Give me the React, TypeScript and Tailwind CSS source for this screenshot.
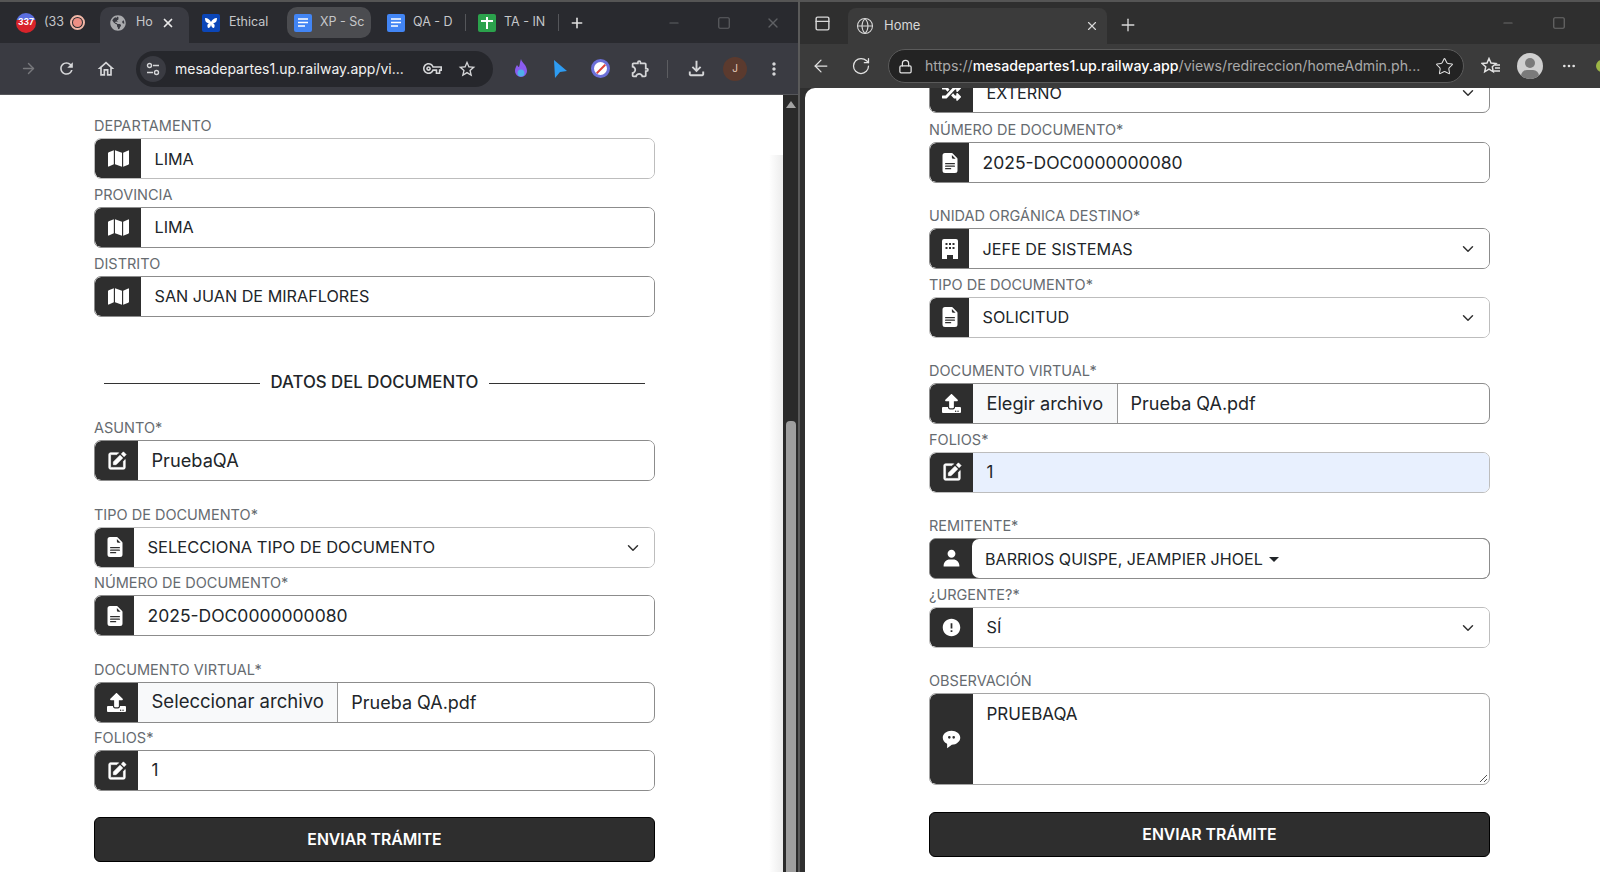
import type { ReactNode } from "react"
import { ChevronDown, ArrowLeft, ArrowRight, Lock, RotateCw, Star, Globe, X, Plus, Minus, Square, MoreHorizontal, PanelTop } from "lucide-react"
import { BiSolidEdit, BiSolidUser, BiSolidErrorCircle, BiSolidMessageRoundedDots } from "react-icons/bi"
import { BsFileEarmarkTextFill } from "react-icons/bs"
import { MdOutlineExtension, MdOutlineHome, MdRefresh, MdOutlineVpnKey, MdStarBorder, MdOutlineFileDownload, MdMoreVert } from "react-icons/md"
import { FaGlobeAmericas, FaMap, FaRandom, FaUpload } from "react-icons/fa"

const font = "font-['Inter','Open_Sans',sans-serif]"

const Label = ({ text }: { text: string }) => (
  <div className="h-[27.5px] flex items-end pb-[3px] text-[14.5px] leading-[18px] text-[#666b70]">{text}</div>
)

const Addon = ({ w, children }: { w: string; children: ReactNode }) => (
  <div className={`${w} shrink-0 bg-[#2e2e2e] text-white flex items-center justify-center text-[21px] rounded-l-[6px]`}>
    {children}
  </div>
)

const MapIcon = () => <FaMap size={21} />
const FileIcon = () => <BsFileEarmarkTextFill size={20} />
const EditIcon = () => <BiSolidEdit size={22} stroke="currentColor" strokeWidth={0.7} />

const BuildingIcon = () => (
  <svg width="16" height="20" viewBox="0 0 16 20">
    <path d="M2 0h12a2 2 0 0 1 2 2v18h-5v-4H5v4H0V2a2 2 0 0 1 2-2z" fill="currentColor" />
    <path d="M3.5 4h2v2h-2zM7 4h2v2H7zM10.500 4h2v2h-2zM3.500 8h2v2h-2zM7 8h2v2H7zM10.500 8h2v2h-2z" fill="#2e2e2e" />
  </svg>
)

const Field = ({
  label,
  value,
  icon,
  w = "w-[39px]",
  select,
  blue,
  soft,
  size = "text-[16.2px]",
  className = "",
}: {
  label: string
  value: string
  icon: ReactNode
  w?: string
  select?: boolean
  blue?: boolean
  soft?: boolean
  size?: string
  className?: string
}) => (
  <div className={className}>
    <Label text={label} />
    <div className={`h-[41px] flex border rounded-[7px] overflow-hidden ${soft ? "border-[#bdbdbd]" : "border-[#8c8c8c]"}`}>
      <Addon w={w}>{icon}</Addon>
      <div
        className={`flex-1 flex items-center justify-between pl-[13.500px] pr-[12px] pt-[1px] ${size} text-[#212529] ${blue ? "bg-[#e8f0fe]" : "bg-white"}`}
      >
        <span>{value}</span>
        {select && <ChevronDown size={18} strokeWidth={2} className="text-[#333]" />}
      </div>
    </div>
  </div>
)

const FileField = ({ label, button, file, size }: { label: string; button: string; file: string; size: string }) => (
  <div className="mt-[18px]">
    <Label text={label} />
    <div className="h-[41px] flex border border-[#8c8c8c] rounded-[7px] overflow-hidden">
      <Addon w="w-[43px]">
        <FaUpload size={19} />
      </Addon>
      <div className={`bg-[#f8f9fa] border-r border-[#9a9a9a] flex items-center px-[13.500px] ${size} text-[#212529]`}>
        {button}
      </div>
      <div className="flex-1 flex items-center pl-[13px] text-[18px] text-[#212529]">{file}</div>
    </div>
  </div>
)

const Submit = ({ className }: { className: string }) => (
  <div className={`${className} h-[45px] bg-[#2e2e2e] rounded-[6px] border border-black flex items-center justify-center text-white font-semibold text-[15.800px]`}>
    ENVIAR TRÁMITE
  </div>
)

const DocsIcon = () => (
  <svg width="18" height="18" viewBox="0 0 18 18" className="shrink-0">
    <rect width="18" height="18" rx="2" fill="#4285f4" />
    <path d="M4 5h10M4 8.500h10M4 12h7" stroke="#fff" strokeWidth="1.700" />
  </svg>
)

const SheetsIcon = () => (
  <svg width="18" height="18" viewBox="0 0 18 18" className="shrink-0">
    <rect width="18" height="18" rx="2" fill="#2ba24c" />
    <path d="M3 7h12M9 3v12" stroke="#fff" strokeWidth="2" />
  </svg>
)

const ButterflyIcon = () => (
  <svg width="18" height="18" viewBox="0 0 18 18" className="shrink-0">
    <rect width="18" height="18" rx="2" fill="#0b46b8" />
    <path d="M3 4c3 0 5 2 6 4 1-2 3-4 6-4 0 3-1 5-4 5 2 1 2 3 1 5-2 0-3-2-3-4 0 2-1 4-3 4-1-2-1-4 1-5-3 0-4-2-4-5z" fill="#fff" />
  </svg>
)

const FavoritesIcon = () => (
  <svg width="20" height="19" viewBox="0 0 20 19" fill="none" stroke="currentColor" strokeWidth="1.500" className="ml-[17px] shrink-0">
    <path d="M8 1.500l2 4.500 5 .5-3.700 3.300 1 5-4.300-2.600-4.300 2.600 1-5L1 6.500l5-.5z" />
    <path d="M14 8h5M14 11h5M13 14h6" />
  </svg>
)

const LeftWindow = () => (
  <div className="w-[798px] h-full flex flex-col shrink-0">
    <div className="h-[43px] bg-[#292a2f] flex items-center border-t-2 border-[#555] shrink-0 text-[12.500px] text-[#c6c7ca] whitespace-nowrap">
      <div className="w-[100px] flex items-center pl-[16px] shrink-0">
        <span className="w-[20px] h-[20px] rounded-full bg-[linear-gradient(#5a6ee0_35%,#d8232a_35%)] text-white text-[8.500px] font-bold flex items-center justify-center">337</span>
        <span className="ml-[8px] w-[18px]">(33</span>
        <span className="ml-[8px] w-[15px] h-[15px] rounded-full border-2 border-[#f2b8a8] flex items-center justify-center">
          <span className="w-[9px] h-[9px] rounded-full bg-[#ee8f84]" />
        </span>
      </div>
      <div className="w-[89px] h-[36px] self-end bg-[#3a3b42] rounded-t-[10px] flex items-center pl-[10px] pb-[5px] shrink-0">
        <FaGlobeAmericas size={16} className="text-[#a9aaad]" />
        <span className="ml-[10px] w-[20px]">Ho</span>
        <X size={14} strokeWidth={3} className="ml-[5px] text-[#e8e8e8]" />
      </div>
      <div className="w-[98px] flex items-center gap-[9px] pl-[13px] shrink-0">
        <ButterflyIcon />
        <span>Ethical</span>
      </div>
      <div className="w-[84px] h-[31px] bg-[#4b4c50] rounded-[10px] flex items-center gap-[8px] pl-[7px] shrink-0">
        <DocsIcon />
        <span>XP - Sc</span>
      </div>
      <div className="w-[94px] flex items-center gap-[8px] pl-[16px] shrink-0">
        <DocsIcon />
        <span>QA - D</span>
      </div>
      <span className="w-px h-[17px] bg-[#55565a] shrink-0" />
      <div className="w-[92px] flex items-center gap-[8px] pl-[12px] shrink-0">
        <SheetsIcon />
        <span>TA - IN</span>
      </div>
      <span className="w-px h-[17px] bg-[#55565a] shrink-0" />
      <Plus size={16} strokeWidth={2.400} className="ml-[10px] text-[#e0e0e0]" />
      <div className="ml-auto pr-[17px] flex items-center gap-[36px] text-[#5f6064]">
        <Minus size={14} />
        <Square size={14} />
        <X size={16} className="-ml-[2px]" />
      </div>
    </div>
    <div className="h-[52px] bg-[#3a3b42] flex items-center border-b border-[#55565a] text-[#d5d6d8] shrink-0">
      <ArrowRight size={17} className="ml-[20px] text-[#77787c]" />
      <MdRefresh size={19} className="ml-[20px]" />
      <MdOutlineHome size={20} className="ml-[20px]" />
      <div className="ml-[20px] w-[357px] h-[36px] rounded-full bg-[#26272c] flex items-center pl-[4px] shrink-0">
        <span className="w-[26px] h-[26px] rounded-full bg-[#3a3b42] flex items-center justify-center">
          <svg width="14" height="14" viewBox="0 0 14 14" fill="none" stroke="currentColor" strokeWidth="1.400">
            <circle cx="3.500" cy="3.500" r="2" />
            <circle cx="10.500" cy="10.500" r="2" />
            <path d="M7 3.500h6M1 10.500h6" />
          </svg>
        </span>
        <span className="ml-[9px] text-[14px] text-[#f1f1f1] w-[231px] whitespace-nowrap">mesadepartes1.up.railway.app/vi...</span>
        <MdOutlineVpnKey size={19} className="ml-[17px]" />
        <MdStarBorder size={20} className="ml-[15px]" />
      </div>
      <svg width="14" height="20" viewBox="0 0 14 20" className="ml-[21px] shrink-0">
        <path d="M7 0c1 4 6 6 6 12a6 6 0 0 1-12 0c0-3 1-4 2-6 1 1 1 2 2 2 1-3 1-5 2-8z" fill="#8a5cf0" />
        <circle cx="7" cy="14" r="3.500" fill="#4fb0e8" />
      </svg>
      <svg width="15" height="20" viewBox="0 0 15 20" className="ml-[25px] shrink-0">
        <path d="M1 1 L14 12 L7 13 L2 19 Z" fill="#2e9cf2" />
      </svg>
      <span className="ml-[23px] w-[19px] h-[19px] rounded-full bg-white border-[3px] border-[#6b6fd8] flex items-center justify-center shrink-0">
        <span className="w-[12px] h-[2px] bg-[#e0433a] -rotate-45" />
      </span>
      <MdOutlineExtension size={21} className="ml-[20px] shrink-0" />
      <span className="ml-[16px] w-px h-[18px] bg-[#5c5d61] shrink-0" />
      <MdOutlineFileDownload size={23} className="ml-[17px] shrink-0" />
      <span className="ml-[15px] w-[24px] h-[24px] rounded-full bg-[#5b3a2e] text-[#e3c9b8] text-[10px] flex items-center justify-center shrink-0">J</span>
      <MdMoreVert size={20} className="ml-[17px] shrink-0" />
    </div>
    <div className="flex-1 flex min-h-0">
      <div className="flex-1 bg-white relative overflow-hidden">
        <div className="absolute right-0 top-[60px] bottom-0 w-[14px] bg-gradient-to-l from-[#ececec] to-transparent" />
        <div className="ml-[94px] w-[561px] relative">
          <Field label="DEPARTAMENTO" value="LIMA" icon={<MapIcon />} w="w-[46px]" soft className="mt-[15.500px]" />
          <Field label="PROVINCIA" value="LIMA" icon={<MapIcon />} w="w-[46px]" />
          <Field label="DISTRITO" value="SAN JUAN DE MIRAFLORES" icon={<MapIcon />} w="w-[46px]" className="mt-[0.500px]" />
          <div className="mt-[53.500px] h-[24px] pt-[2px] px-[10px] flex items-center gap-[11px] text-[16.800px] font-medium text-[#212529]">
            <span className="flex-1 h-px bg-[#333]" />
            <span>DATOS DEL DOCUMENTO</span>
            <span className="flex-1 h-px bg-[#333]" />
          </div>
          <Field label="ASUNTO*" value="PruebaQA" icon={<EditIcon />} w="w-[43px]" size="text-[18.200px]" className="mt-[18.500px]" />
          <Field label="TIPO DE DOCUMENTO*" value="SELECCIONA TIPO DE DOCUMENTO" icon={<FileIcon />} select soft size="text-[16.500px]" className="mt-[18px]" />
          <Field label="NÚMERO DE DOCUMENTO*" value="2025-DOC0000000080" icon={<FileIcon />} size="text-[17.500px]" />
          <FileField label="DOCUMENTO VIRTUAL*" button="Seleccionar archivo" file="Prueba QA.pdf" size="text-[18.500px]" />
          <Field label="FOLIOS*" value="1" icon={<EditIcon />} w="w-[43px]" size="text-[17px]" />
          <Submit className="mt-[26px]" />
        </div>
      </div>
      <div className="w-[15px] bg-[#2a2a2a] relative shrink-0">
        <div className="mx-auto mt-[6px] w-0 h-0 border-x-[5px] border-x-transparent border-b-[7px] border-b-[#a3a3a3]" />
        <div className="absolute left-[3px] right-[2px] top-[326px] bottom-0 bg-[#9e9e9e] rounded-t-[4px]" />
      </div>
    </div>
  </div>
)

const RightWindow = () => (
  <div className="flex-1 h-full flex flex-col min-w-0 bg-[#2f2f2f] overflow-hidden">
    <div className="h-[44px] flex items-end border-t-2 border-[#555] pl-[14px] text-[#d8d8d8] shrink-0">
      <PanelTop size={17} className="mb-[12px]" />
      <div className="ml-[17px] w-[259px] h-[36px] bg-[#3b3b3b] rounded-t-[8px] flex items-center pl-[8px] pr-[8px]">
        <Globe size={18} strokeWidth={1.400} />
        <span className="ml-[10px] text-[13px] flex-1">Home</span>
        <X size={14} />
      </div>
      <Plus size={20} strokeWidth={1.600} className="ml-[11px] mb-[9px]" />
      <div className="ml-[363px] mb-[14px] flex items-center gap-[37px] text-[#6b6b6b]">
        <Minus size={14} />
        <Square size={14} />
      </div>
    </div>
    <div className="h-[44px] bg-[#3b3b3b] flex items-center text-[#e3e3e3] shrink-0">
      <ArrowLeft size={20} strokeWidth={1.500} className="ml-[11px] shrink-0" />
      <RotateCw size={20} strokeWidth={1.500} className="ml-[20px] shrink-0" />
      <div className="ml-[17px] w-[576px] h-[34px] rounded-full bg-[#232323] border border-[#5b5b5b] flex items-center pl-[9px] shrink-0">
        <Lock size={15} className="shrink-0" />
        <span className="ml-[12px] text-[14.150px] w-[495px] whitespace-nowrap text-[#a9a9a9]">
          https://<span className="text-white font-medium">mesadepartes1.up.railway.app</span>/views/redireccion/homeAdmin.ph...
        </span>
        <Star size={19} strokeWidth={1.300} className="ml-[15px] shrink-0" />
      </div>
      <FavoritesIcon />
      <span className="ml-[16px] w-[26px] h-[26px] rounded-full bg-[#cfcfcf] overflow-hidden relative shrink-0">
        <span className="absolute left-[8px] top-[5px] w-[10px] h-[10px] rounded-full bg-[#7a7a7a]" />
        <span className="absolute left-[4px] top-[17px] w-[18px] h-[12px] rounded-full bg-[#7a7a7a]" />
      </span>
      <MoreHorizontal size={16} className="ml-[18px] shrink-0" />
      <span className="ml-[19px] w-[6px] h-[12px] rounded-l-full bg-[#9cb545] shrink-0" />
    </div>
    <div className="flex-1 min-h-0 pl-[5px]">
      <div className="h-full bg-white rounded-tl-[10px] overflow-hidden pl-[124px]">
        <div className="w-[561px] -mt-[16px]">
          <div className="mb-[1.500px] h-[41px] flex border border-[#8c8c8c] rounded-[7px] overflow-hidden">
            <Addon w="w-[43px]">
              <FaRandom size={19} />
            </Addon>
            <div className="flex-1 flex items-center justify-between pl-[13.500px] pr-[12px] pt-[1px] text-[16.200px] text-[#212529]">
              <span>EXTERNO</span>
              <ChevronDown size={18} strokeWidth={2} className="text-[#333]" />
            </div>
          </div>
          <Field label="NÚMERO DE DOCUMENTO*" value="2025-DOC0000000080" icon={<FileIcon />} size="text-[17.500px]" />
          <Field label="UNIDAD ORGÁNICA DESTINO*" value="JEFE DE SISTEMAS" icon={<BuildingIcon />} select className="mt-[17.500px]" />
          <Field label="TIPO DE DOCUMENTO*" value="SOLICITUD" icon={<FileIcon />} select soft />
          <FileField label="DOCUMENTO VIRTUAL*" button="Elegir archivo" file="Prueba QA.pdf" size="text-[18.200px]" />
          <Field label="FOLIOS*" value="1" icon={<EditIcon />} w="w-[43px]" blue soft size="text-[17px]" />
          <div className="mt-[18px]">
            <Label text="REMITENTE*" />
            <div className="h-[41px] flex border border-[#8c8c8c] rounded-[7px] overflow-hidden bg-[#2e2e2e]">
              <Addon w="w-[42px]">
                <BiSolidUser />
              </Addon>
              <div className="flex-1 bg-white rounded-l-[7px] flex items-center pl-[13px] pt-[1px] text-[16.100px] text-[#212529]">
                BARRIOS QUISPE, JEAMPIER JHOEL
                <span className="ml-[6px] w-0 h-0 border-x-[5px] border-x-transparent border-t-[5px] border-t-[#212529]" />
              </div>
            </div>
          </div>
          <Field label="¿URGENTE?*" value="SÍ" icon={<BiSolidErrorCircle />} w="w-[43px]" select soft />
          <div className="mt-[18px]">
            <Label text="OBSERVACIÓN" />
            <div className="h-[92px] flex border border-[#a5a5a5] rounded-[7px] overflow-hidden">
              <Addon w="w-[43px]">
                <BiSolidMessageRoundedDots />
              </Addon>
              <div className="flex-1 pl-[13.500px] pt-[8px] text-[17px] text-[#212529] relative">
                PRUEBAQA
                <svg width="10" height="10" viewBox="0 0 10 10" className="absolute right-[1px] bottom-[1px]">
                  <path d="M9 2 L2 9 M9 6 L6 9" stroke="#555" strokeWidth="1" />
                </svg>
              </div>
            </div>
          </div>
          <Submit className="mt-[27px]" />
        </div>
      </div>
    </div>
  </div>
)

const App = () => {
  return (
    <div className={`${font} w-[1600px] h-[872px] flex overflow-hidden bg-[#2a2a2a]`}>
      <LeftWindow />
      <div className="w-[2px] bg-[#5a5a5a] shrink-0" />
      <RightWindow />
    </div>
  )
}

export default App
